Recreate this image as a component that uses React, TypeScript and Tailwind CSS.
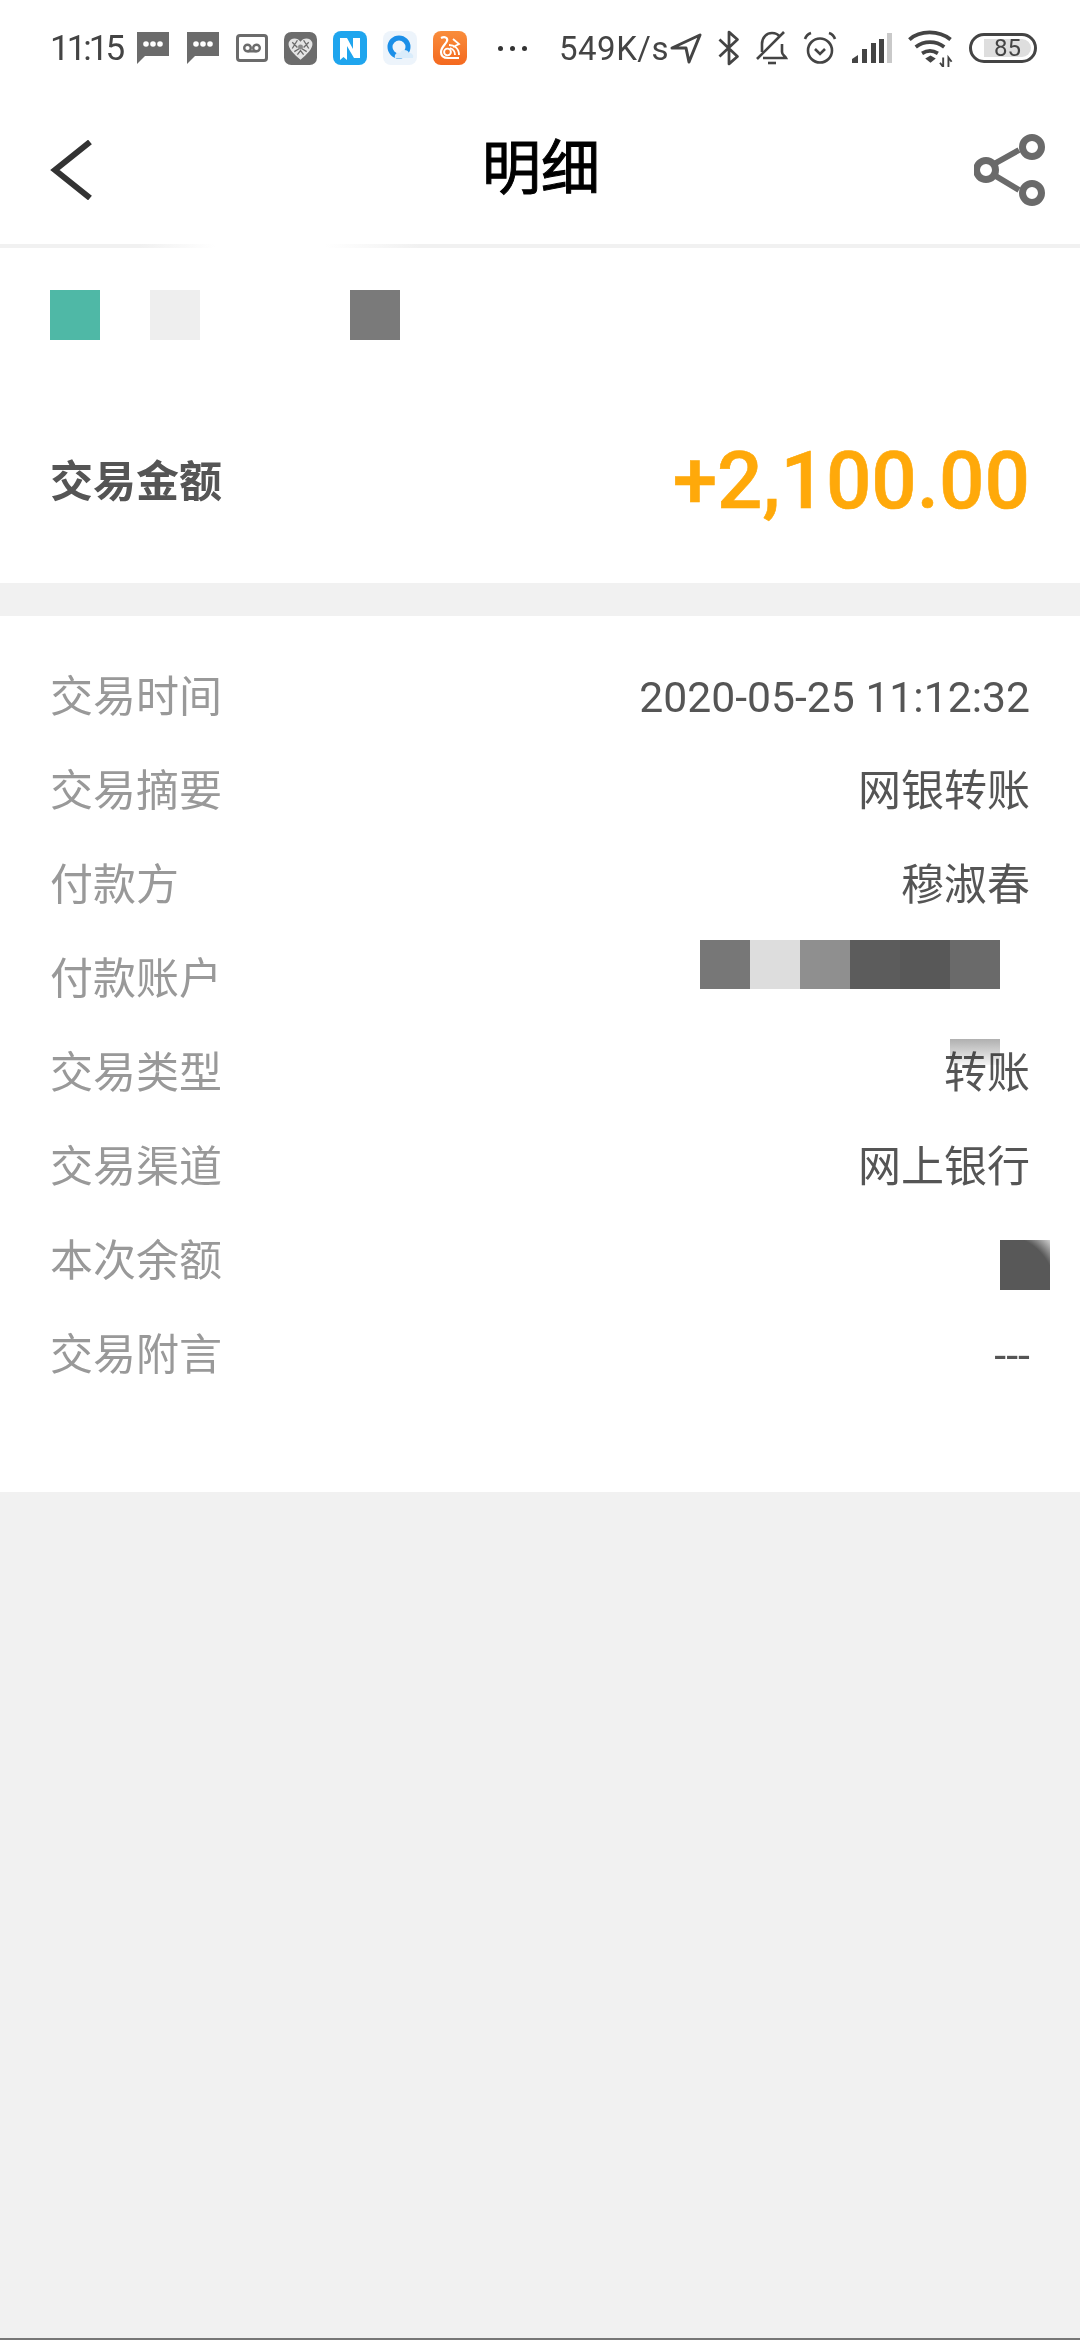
const cjk = "font-['Roboto','Noto_Sans_CJK_SC',sans-serif]"

const rows = [
  { label: '交易时间', value: '2020-05-25 11:12:32' },
  { label: '交易摘要', value: '网银转账' },
  { label: '付款方', value: '穆淑春' },
  { label: '付款账户', value: '' },
  { label: '交易类型', value: '转账' },
  { label: '交易渠道', value: '网上银行' },
  { label: '本次余额', value: '' },
  { label: '交易附言', value: '---' },
]

const accountBlocks = ['bg-[#777777]', 'bg-[#dddddd]', 'bg-[#8f8f8f]', 'bg-[#5c5c5c]', 'bg-[#585858]', 'bg-[#6a6a6a]']

function ChatIcon() {
  return (
    <svg width="34" height="34" viewBox="0 0 34 34" className="shrink-0">
      <path d="M1 1h32v24H9l-8 8z" fill="#6b6b6b" />
      <circle cx="10" cy="13" r="2.8" fill="#fff" />
      <circle cx="17" cy="13" r="2.8" fill="#fff" />
      <circle cx="24" cy="13" r="2.8" fill="#fff" />
    </svg>
  )
}

function TapeIcon() {
  return (
    <svg width="32" height="28" viewBox="0 0 32 28" className="shrink-0">
      <rect x="1.5" y="1.5" width="29" height="25" rx="2.5" fill="none" stroke="#6b6b6b" strokeWidth="3" />
      <circle cx="11.5" cy="14" r="3.3" fill="none" stroke="#6b6b6b" strokeWidth="2.4" />
      <circle cx="20.5" cy="14" r="3.3" fill="none" stroke="#6b6b6b" strokeWidth="2.4" />
      <path d="M11.5 17.3h9" stroke="#6b6b6b" strokeWidth="2.4" />
    </svg>
  )
}

function PddIcon() {
  return (
    <svg width="33" height="33" viewBox="0 0 32 32" className="shrink-0">
      <rect width="32" height="32" rx="7" fill="#6c6c6c" />
      <path d="M16 9.500C13.500 5 6 5 4.500 10.500 3.500 16 10 22 16 27c6-5 12.500-11 11.500-16.500C26 5 18.500 5 16 9.500z" fill="#e4e4e4" />
      <path d="M8 10l5 5M13 8l-5 8M24 10l-5 5M19 8l5 8M10 19l5-3M22 19l-5-3M13 22l3-4 3 4" stroke="#6c6c6c" strokeWidth="1.300" fill="none" />
      <circle cx="16" cy="14.500" r="2.400" fill="#8a8a8a" />
    </svg>
  )
}

function NIcon() {
  return (
    <svg width="34" height="34" viewBox="0 0 34 34" className="shrink-0">
      <rect width="34" height="34" rx="8" fill="#1fa5ee" />
      <path d="M7 7h7l6 11V7h7v20h-6l-7-12v14l-3.500-3L7 29z" fill="#fff" />
    </svg>
  )
}

function QIcon() {
  return (
    <svg width="34" height="34" viewBox="0 0 34 34" className="shrink-0">
      <rect width="34" height="34" rx="8" fill="#edf4fb" />
      <circle cx="16" cy="16" r="9" fill="none" stroke="#1b8fe8" strokeWidth="5" />
      <path d="M12 27c-1-4 2-6 5-5 1-4 8-4 9 0 3 0 5 2 4 5z" fill="#d9ecfb" />
    </svg>
  )
}

function UcIcon() {
  return (
    <svg width="34" height="34" viewBox="0 0 34 34" className="shrink-0">
      <defs>
        <linearGradient id="uc" x1="0" y1="0" x2="0" y2="1">
          <stop offset="0" stopColor="#f98d3c" />
          <stop offset="1" stopColor="#f4691f" />
        </linearGradient>
      </defs>
      <rect width="34" height="34" rx="8" fill="url(#uc)" />
      <path d="M8 7c4-2 7 0 6 3-1 3-6 6-6 11 0 4 3 6 7 6h11" fill="none" stroke="#fff" strokeWidth="2.200" />
      <circle cx="14.500" cy="21" r="3.400" fill="none" stroke="#fff" strokeWidth="1.900" />
      <path d="M20 8l6 5-6 3M16 14c5 0 10 3 10 10M17 17c3 1 5 3 5 7" fill="none" stroke="#fff" strokeWidth="1.800" />
    </svg>
  )
}

function NavArrowIcon() {
  return (
    <svg width="32" height="32" viewBox="0 0 32 32" className="shrink-0">
      <path d="M2 16L30 3 19 30l-3-14z" fill="none" stroke="#444" strokeWidth="3" strokeLinejoin="round" />
    </svg>
  )
}

function BluetoothIcon() {
  return (
    <svg width="24" height="36" viewBox="0 0 22 34" className="shrink-0">
      <path d="M2 9l17 16-8 7V2l8 7L2 25" fill="none" stroke="#444" strokeWidth="2.600" strokeLinejoin="round" />
    </svg>
  )
}

function BellOffIcon() {
  return (
    <svg width="32" height="34" viewBox="0 0 32 34" className="shrink-0">
      <path d="M6 21V13C6 6 11 2 16 2c3 0 6 1 8 4M26 13v8c0 3 3 4 4 6H7" fill="none" stroke="#444" strokeWidth="2.600" />
      <path d="M1 28L28 1" stroke="#444" strokeWidth="2.600" />
      <path d="M12 32h8" stroke="#444" strokeWidth="2.600" />
    </svg>
  )
}

function AlarmIcon() {
  return (
    <svg width="34" height="34" viewBox="0 0 34 34" className="shrink-0">
      <circle cx="17" cy="19.500" r="12" fill="none" stroke="#444" strokeWidth="2.600" />
      <path d="M12 18l5 5 5-5" fill="none" stroke="#444" strokeWidth="2.600" />
      <path d="M2 8c1-3 3-5 6-6M32 8c-1-3-3-5-6-6" fill="none" stroke="#444" strokeWidth="2.600" />
    </svg>
  )
}

function SignalIcon() {
  return (
    <svg width="40" height="30" viewBox="0 0 40 30" className="shrink-0">
      <path d="M0 30v-4l6-4v8z" fill="#444" />
      <rect x="10" y="16" width="5" height="14" fill="#444" />
      <rect x="19" y="10" width="5" height="20" fill="#444" />
      <rect x="27" y="6" width="5" height="24" fill="#444" />
      <rect x="35" y="0" width="5" height="30" fill="#c9c9c9" />
    </svg>
  )
}

function WifiIcon() {
  return (
    <svg width="47" height="38" viewBox="0 0 44 36" className="shrink-0">
      <path d="M2 10C12 1 30 1 41 10M8 17c8-6 19-6 27 0M14 23c5-3 10-3 15 0" fill="none" stroke="#444" strokeWidth="3.600" />
      <path d="M17 28l5-3 5 3-5 4z" fill="#444" />
      <path d="M34 27v9l-3-4M39 36v-9l3 4" fill="none" stroke="#444" strokeWidth="1.800" />
    </svg>
  )
}

function ShareIcon() {
  return (
    <svg width="72" height="72" viewBox="0 0 72 72" className="shrink-0">
      <path d="M20 30l25-14M20 41l25 15" stroke="#6a6a6a" strokeWidth="6" />
      <circle cx="12" cy="36" r="9.500" fill="#fff" stroke="#6a6a6a" strokeWidth="7" />
      <circle cx="58" cy="13" r="9.500" fill="#fff" stroke="#6a6a6a" strokeWidth="7" />
      <circle cx="58" cy="59" r="9.500" fill="#fff" stroke="#6a6a6a" strokeWidth="7" />
    </svg>
  )
}

function StatusBar() {
  return (
    <div className="h-[96px] flex items-center pl-[50px] pr-[43px] text-[#444] font-['Roboto',sans-serif]">
      <span className="text-[35px] leading-none w-[86px] tracking-[-3px]">11:15</span>
      <div className="flex items-center gap-[16px]">
        <ChatIcon />
        <ChatIcon />
        <TapeIcon />
        <PddIcon />
        <NIcon />
        <QIcon />
        <UcIcon />
      </div>
      <div className="flex items-center gap-[7px] ml-[31px] w-[59px]">
        <span className="size-[5px] rounded-full bg-[#333]" />
        <span className="size-[5px] rounded-full bg-[#333]" />
        <span className="size-[5px] rounded-full bg-[#333]" />
      </div>
      <span className="ml-[2px] text-[33px] leading-none tracking-[0.5px] w-[108px] shrink-0">549K/s</span>
      <div className="flex items-center ml-auto gap-[15px]">
        <NavArrowIcon />
        <BluetoothIcon />
        <BellOffIcon />
        <AlarmIcon />
        <SignalIcon />
        <WifiIcon />
        <div className="w-[68px] h-[30px] rounded-full border-[3px] border-[#444] p-[3px] flex items-center">
          <div className="w-[48px] h-[18px] ml-[9px] rounded-r-full bg-[#dedede] flex items-center justify-center text-[24px] leading-none">
            85
          </div>
        </div>
      </div>
    </div>
  )
}

export default function App() {
  return (
    <div className={`w-[1080px] h-[2340px] flex flex-col bg-[#f1f1f1] ${cjk}`}>
      <div className="bg-white">
        <StatusBar />

        {/* Title bar */}
        <div className="h-[148px] flex items-center justify-between pl-[50px] pr-[34px]">
          <svg width="42" height="60" viewBox="0 0 42 60">
            <path d="M40 2L5 30l35 28" fill="none" stroke="#333" strokeWidth="6" />
          </svg>
          <h1 className="text-[59px] leading-none font-normal text-black ml-[16px] mb-[4px] [-webkit-text-stroke:1px_#000]">明细</h1>
          <ShareIcon />
        </div>
        <div className="h-[4px] bg-[linear-gradient(90deg,#f1f1f1_0,#f1f1f1_140px,#ffffff_215px,#ffffff_325px,#f1f1f1_420px,#f1f1f1_100%)]" />

        {/* Amount */}
        <div className="h-[335px] px-[50px] pt-[42px]">
          <div className="flex gap-[50px]">
            <div className="size-[50px] bg-[#4fb8a6]" />
            <div className="size-[50px] bg-[#eeeeee]" />
            <div className="size-[50px] ml-[100px] bg-[#7a7a7a]" />
          </div>
          <div className="flex items-center justify-between mt-[101px]">
            <span className="text-[43px] font-bold text-[#555] mt-[3px]">交易金额</span>
            <span className="text-[80px] leading-none font-medium text-[#ffa90a] [-webkit-text-stroke:0.6px_#ffa90a]">+2,100.00</span>
          </div>
        </div>
      </div>

      {/* Details */}
      <div className="mt-[33px] bg-white h-[876px] pt-[34px] px-[50px]">
        {rows.map((row) => (
          <div key={row.label} className="relative h-[94px] flex items-center justify-between text-[43px]">
            <span className="text-[#999]">{row.label}</span>
            {row.label === '付款账户' ? (
              <div className="flex mr-[30px] mb-[30px]">
                {accountBlocks.map((c, i) => (
                  <div key={i} className={`w-[50px] h-[49px] ${c}`} />
                ))}
              </div>
            ) : row.label === '本次余额' ? (
              <div className="size-[50px] -mr-[20px] mt-[8px] bg-[radial-gradient(circle_at_0%_100%,#585858_0,#585858_78%,#cfcfcf_100%)]" />
            ) : row.label === '交易时间' ? (
              <span className="text-[42.700px] text-[#555]">{row.value}</span>
            ) : (
              <span className="text-[#555]">{row.value}</span>
            )}
            {row.label === '交易类型' && (
              <div className="absolute right-[30px] top-[13px] w-[50px] h-[26px] bg-[linear-gradient(180deg,#b0b0b0,#f4f4f4)] mix-blend-multiply" />
            )}
          </div>
        ))}
      </div>

      <div className="flex-1" />
      <div className="h-[2px] bg-[#777]" />
    </div>
  )
}
